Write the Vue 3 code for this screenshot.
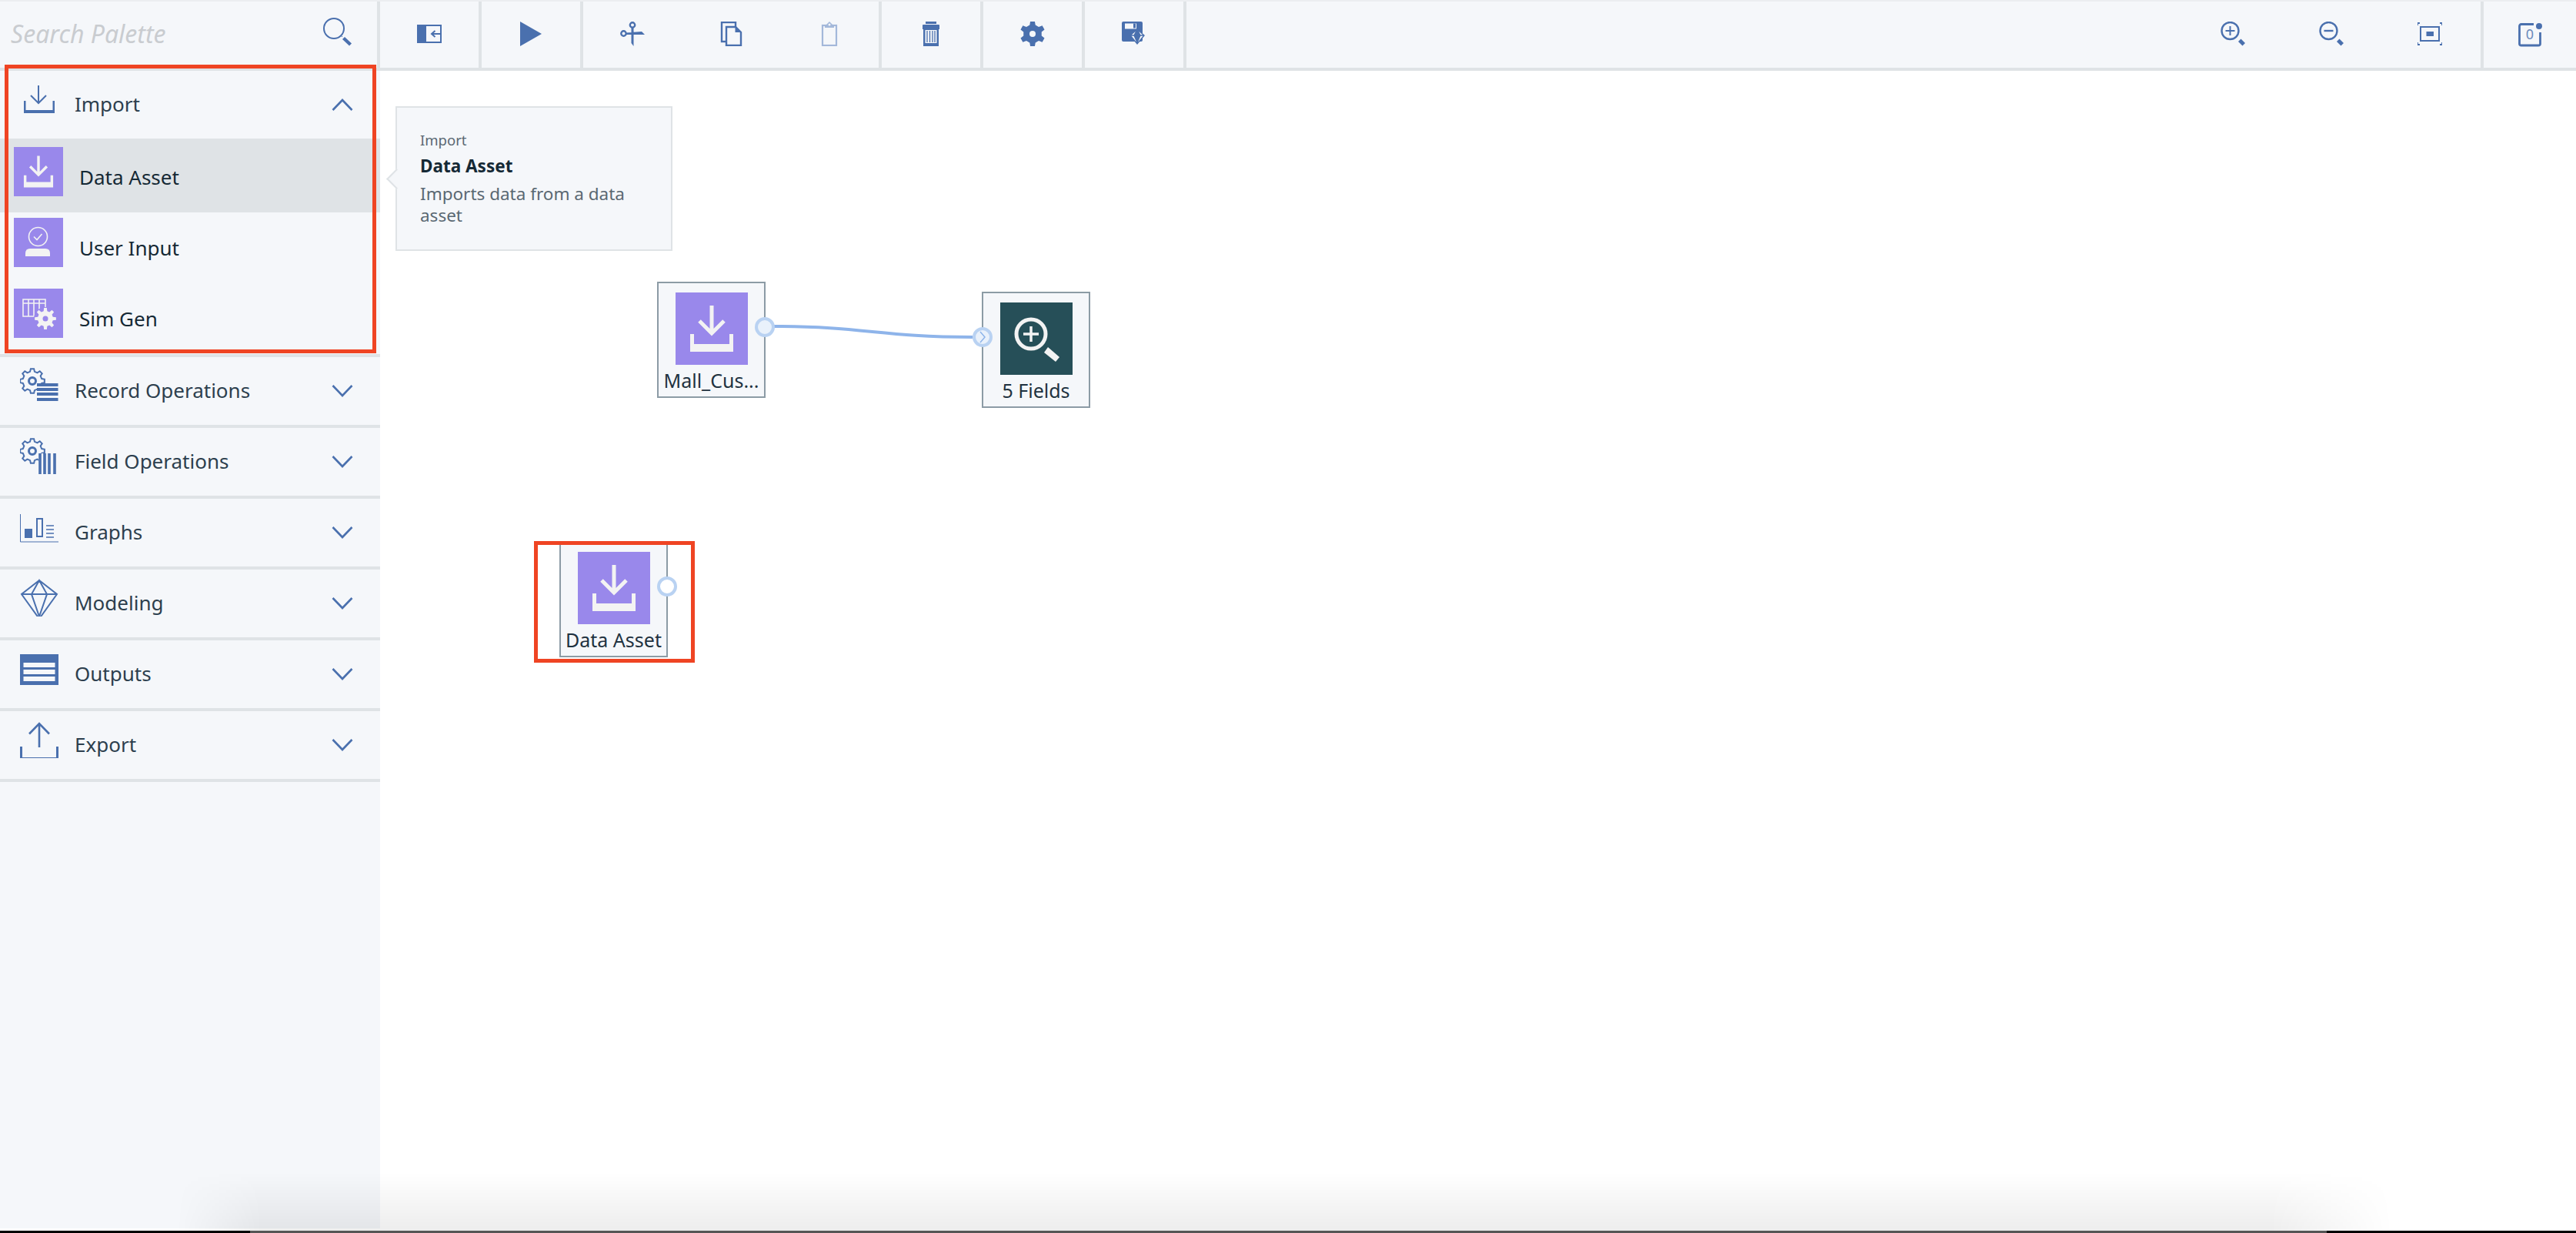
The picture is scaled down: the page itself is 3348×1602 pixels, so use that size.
<script setup>
// gear outline shared by the palette and toolbar icons
function gearPath(cx, cy, rIn, rOut, teeth) {
  const pitch = (Math.PI * 2) / teeth
  const pts = []
  for (let i = 0; i < teeth; i++) {
    const a = -Math.PI / 2 + i * pitch
    for (const [off, r] of [[-0.3, rIn], [-0.17, rOut], [0.17, rOut], [0.3, rIn]]) {
      const t = a + off * pitch
      pts.push((cx + Math.cos(t) * r).toFixed(2) + ' ' + (cy + Math.sin(t) * r).toFixed(2))
    }
  }
  return 'M' + pts.join('L') + 'Z'
}

const recordGear = gearPath(16, 20, 12.5, 16, 8)
const fieldGear = gearPath(16, 19, 12.5, 16, 8)
const simGear = gearPath(41, 39, 10, 14, 8)
const toolGear = gearPath(16, 16, 12, 16.5, 6)

const items = [
  { label: 'Data Asset', icon: 'node-import', active: true },
  { label: 'User Input', icon: 'node-user' },
  { label: 'Sim Gen', icon: 'node-sim' }
]

const categories = [
  { label: 'Record Operations', icon: 'cat-record' },
  { label: 'Field Operations', icon: 'cat-field' },
  { label: 'Graphs', icon: 'cat-graphs' },
  { label: 'Modeling', icon: 'cat-modeling' },
  { label: 'Outputs', icon: 'cat-outputs' },
  { label: 'Export', icon: 'cat-export' }
]

const toolGroups = [
  ['tb-panel'],
  ['tb-play'],
  ['tb-cut', 'tb-copy', 'tb-paste'],
  ['tb-trash'],
  ['tb-gear'],
  ['tb-save']
]

const nodes = [
  { label: 'Mall_Cus...', x: 360, y: 274, icon: 'node-import', out: 'filled' },
  { label: '5 Fields', x: 782, y: 287, icon: 'node-fields', input: true },
  { label: 'Data Asset', x: 233, y: 611, icon: 'node-import', out: 'empty' }
]
</script>

<template>
  <div class="app">
    <svg class="sprite" width="0" height="0">
      <defs>
        <symbol id="node-import" viewBox="0 0 94 94">
          <path d="M47 17V53M31 37L47 53L63 37" fill="none" stroke="#f3f3f3" stroke-width="5" />
          <path d="M19 54H24V67H70V54H75V77H19Z" fill="#f3f3f3" />
        </symbol>
        <symbol id="node-user" viewBox="0 0 64 64">
          <circle cx="31.5" cy="24.5" r="12" fill="none" stroke="#f3f3f3" stroke-width="1.6" />
          <path d="M26 24.5L30 28.5L36.5 21" fill="none" stroke="#f3f3f3" stroke-width="1.6" />
          <path d="M15 50V46Q15 40 21 40H41Q47 40 47 46V50Z" fill="#f3f3f3" />
        </symbol>
        <symbol id="node-sim" viewBox="0 0 64 64">
          <path d="M12 14H41V36H12ZM12 19H41M19 14V36M26 14V36M33 14V36M12 14H41" fill="none" stroke="#f3f3f3" stroke-width="1.6" />
          <circle cx="41" cy="39" r="15" fill="#9988eb" />
          <path :d="simGear" fill="#f3f3f3" />
          <circle cx="41" cy="39" r="3.5" fill="#9988eb" />
        </symbol>
        <symbol id="node-fields" viewBox="0 0 94 94">
          <circle cx="40" cy="41" r="19" fill="none" stroke="#f3f3f3" stroke-width="5" />
          <path d="M30 41H50M40 31V51" stroke="#f3f3f3" stroke-width="3.5" />
          <path d="M62 58L77 71L72 77L57 65Z" fill="#f3f3f3" />
        </symbol>

        <symbol id="cat-import" viewBox="0 0 50 50">
          <path d="M24 8V31M14 21L24 31L34 21" fill="none" stroke="#4a70ae" stroke-width="2" />
          <path d="M5 28H7.5V40H42.5V28H45V44H5Z" fill="#4a70ae" />
        </symbol>
        <symbol id="cat-record" viewBox="0 0 50 50">
          <path :d="recordGear" fill="none" stroke="#4a70ae" stroke-width="2" />
          <circle cx="16" cy="20" r="4.5" fill="none" stroke="#4a70ae" stroke-width="3" />
          <rect x="22" y="23" width="27.5" height="23" fill="#f5f7fa" />
          <path d="M22 25H49.5M22 31H49.5M22 37H49.5M22 44H49.5" stroke="#4a70ae" stroke-width="4" />
        </symbol>
        <symbol id="cat-field" viewBox="0 0 50 50">
          <path :d="fieldGear" fill="none" stroke="#4a70ae" stroke-width="2" />
          <circle cx="16" cy="19" r="4.5" fill="none" stroke="#4a70ae" stroke-width="3" />
          <rect x="24" y="22" width="24" height="27" fill="#f5f7fa" />
          <path d="M26 22V49M32 22V49M38 22V49M45 22V49" stroke="#4a70ae" stroke-width="3.6" />
        </symbol>
        <symbol id="cat-graphs" viewBox="0 0 50 50">
          <path d="M.5 9V45H50" fill="none" stroke="#4a70ae" />
          <rect x="6" y="28" width="10" height="12" fill="#4a70ae" />
          <rect x="22" y="15" width="7" height="23" fill="none" stroke="#4a70ae" stroke-width="2" />
          <path d="M34 24H44M34 29H44M34 34H44M34 39H44" stroke="#4a70ae" stroke-width="1.5" />
        </symbol>
        <symbol id="cat-modeling" viewBox="0 0 50 50">
          <path d="M25 3L48 21L25 53L2 21ZM2 21H48M25 3L15 21L25 50L35 21Z" fill="none" stroke="#4a70ae" stroke-width="2" />
        </symbol>
        <symbol id="cat-outputs" viewBox="0 0 50 50">
          <rect y="7" width="50" height="40" fill="#4a70ae" />
          <path d="M4.5 18H45.5V24H4.5ZM4.5 27H45.5V33H4.5ZM4.5 36H45.5V42H4.5Z" fill="#f5f7fa" />
        </symbol>
        <symbol id="cat-export" viewBox="0 0 50 50">
          <path d="M25 6V36M12 18.500L25 5L38 18.500" fill="none" stroke="#4a70ae" stroke-width="2.600" />
          <path d="M0 35H3V49H47V35H50V54H0Z" fill="#4a70ae" />
        </symbol>

        <symbol id="tb-panel" viewBox="0 0 32 32">
          <rect y="4" width="32" height="24" fill="#4a70ae" />
          <rect x="12" y="6" width="18" height="20" fill="#f5f7fa" />
          <path d="M19 16H30M23.5 12L19 16L23.5 20" fill="none" stroke="#4a70ae" stroke-width="2" />
        </symbol>
        <symbol id="tb-play" viewBox="0 0 32 32">
          <path d="M2 0L30 16L2 32Z" fill="#4a70ae" />
        </symbol>
        <symbol id="tb-cut" viewBox="0 0 32 32">
          <circle cx="16" cy="4.5" r="3.2" fill="none" stroke="#4a70ae" stroke-width="2.4" />
          <circle cx="4.5" cy="15.5" r="3.2" fill="none" stroke="#4a70ae" stroke-width="2.4" />
          <path d="M14.5 7H17.5V32L14.5 28ZM8 14.5L28 13L32 17L8 17Z" fill="#4a70ae" />
        </symbol>
        <symbol id="tb-copy" viewBox="0 0 32 32">
          <rect x="4" y="1" width="18" height="25" fill="none" stroke="#4a70ae" stroke-width="2.4" />
          <path d="M10 7H22L29 14V31H10Z" fill="#f5f7fa" stroke="#4a70ae" stroke-width="2.4" />
          <path d="M21.5 6V14H29Z" fill="#4a70ae" />
        </symbol>
        <symbol id="tb-paste" viewBox="0 0 32 32">
          <rect x="7" y="5" width="18" height="26" fill="none" stroke="#a3b8da" stroke-width="2.2" />
          <path d="M10 6L13 3L16 0L19 3L22 6V8H10Z" fill="#a3b8da" />
          <circle cx="16" cy="4" r="1.5" fill="#f5f7fa" />
        </symbol>
        <symbol id="tb-trash" viewBox="0 0 32 32">
          <path d="M9 0H23V3H9ZM6 4H26Q27 4 27 5V10H26V32H6V10H5V5Q5 4 6 4Z" fill="#4a70ae" />
          <rect x="8.5" y="11" width="15" height="17" fill="#f5f7fa" />
          <path d="M11 12V27M14.5 12V27M18 12V27M21 12V27" stroke="#4a70ae" stroke-width="1.3" />
        </symbol>
        <symbol id="tb-gear" viewBox="0 0 32 32">
          <path :d="toolGear" fill="#4a70ae" />
          <circle cx="16" cy="16" r="4" fill="#f5f7fa" />
        </symbol>
        <symbol id="tb-save" viewBox="0 0 32 32">
          <rect width="27" height="26" rx="2" fill="#4a70ae" />
          <rect x="4" y="2.5" width="15" height="7" fill="#f5f7fa" />
          <rect x="15" y="2.5" width="3" height="6" fill="#4a70ae" />
          <path d="M20 10L29 18L20 29L11 18ZM11 18H29M20 10L16 18L20 27L24 18Z" fill="#f5f7fa" stroke="#4a70ae" stroke-width="1.4" />
        </symbol>
        <symbol id="tb-zoom-in" viewBox="0 0 32 32">
          <circle cx="12.5" cy="12" r="11" fill="none" stroke="#4a70ae" stroke-width="2.4" />
          <path d="M6.5 12H18.5M12.5 6V18" stroke="#4a70ae" stroke-width="2" />
          <path d="M23 26L26.500 22.500L32 28L28.500 31.500Z" fill="#4a70ae" />
        </symbol>
        <symbol id="tb-zoom-out" viewBox="0 0 32 32">
          <circle cx="12.5" cy="12" r="11" fill="none" stroke="#4a70ae" stroke-width="2.4" />
          <path d="M6.5 12H18.5" stroke="#4a70ae" stroke-width="2.4" />
          <path d="M23 26L26.500 22.500L32 28L28.500 31.500Z" fill="#4a70ae" />
        </symbol>
        <symbol id="tb-fit" viewBox="0 0 32 32">
          <rect x="4" y="7" width="24" height="18" fill="none" stroke="#4a70ae" stroke-width="2" />
          <rect x="11.500" y="13" width="9.500" height="6" fill="#4a70ae" />
          <path d="M0 5V2H3M29 2H32V5M0 27V30H3M29 30H32V27" fill="none" stroke="#4a70ae" stroke-width="1.800" />
        </symbol>
      </defs>
    </svg>

    <aside class="palette">
      <div class="search">
        <span class="search-text">Search Palette</span>
        <svg class="search-icon" width="40" height="40" viewBox="0 0 40 40">
          <circle cx="15" cy="15" r="13" fill="none" stroke="#4a70ae" stroke-width="2" />
          <path d="M24 24L26 26" stroke="#4a70ae" />
          <path d="M26 29L29 26L38 34.500L35 37.500Z" fill="#4a70ae" />
        </svg>
      </div>

      <section class="import">
        <div class="cat-row cat-open">
          <svg class="cat-icon"><use href="#cat-import" /></svg>
          <span class="cat-label">Import</span>
          <svg class="chevron" width="28" height="16" viewBox="0 0 28 16">
            <path d="M1.500 15L14 2L26.500 15" fill="none" stroke="#4a70ae" stroke-width="2.600" />
          </svg>
        </div>
        <div v-for="item in items" :key="item.label" class="item" :class="{ active: item.active }">
          <svg class="item-icon"><use :href="'#' + item.icon" /></svg>
          <span class="item-label">{{ item.label }}</span>
        </div>
      </section>

      <div v-for="cat in categories" :key="cat.label" class="cat-row cat-closed">
        <svg class="cat-icon"><use :href="'#' + cat.icon" /></svg>
        <span class="cat-label">{{ cat.label }}</span>
        <svg class="chevron" width="28" height="16" viewBox="0 0 28 16">
          <path d="M1.500 1L14 14L26.500 1" fill="none" stroke="#4a70ae" stroke-width="2.600" />
        </svg>
      </div>

      <div class="annot annot-palette"></div>
    </aside>

    <main class="main">
      <div class="toolbar">
        <div v-for="(group, i) in toolGroups" :key="i" class="tool-group">
          <div v-for="icon in group" :key="icon" class="tool">
            <svg class="tool-icon"><use :href="'#' + icon" /></svg>
          </div>
        </div>
        <div class="tool-spacer"></div>
        <div class="zoom-group">
          <div class="tool"><svg class="tool-icon"><use href="#tb-zoom-in" /></svg></div>
          <div class="tool"><svg class="tool-icon"><use href="#tb-zoom-out" /></svg></div>
          <div class="tool"><svg class="tool-icon"><use href="#tb-fit" /></svg></div>
        </div>
        <div class="notify">
          <svg class="tool-icon" viewBox="0 0 32 32">
            <path d="M21 3.500H5Q2.500 3.500 2.500 6V29Q2.500 31 5 31H27Q29.500 31 29.500 29V14" fill="none" stroke="#4a70ae" stroke-width="2.800" />
            <circle cx="28" cy="6" r="4" fill="#4a70ae" />
            <text x="16" y="23" text-anchor="middle" class="notify-count">0</text>
          </svg>
        </div>
      </div>

      <div class="canvas">
        <div class="tooltip">
          <div class="tip-cat">Import</div>
          <div class="tip-title">Data Asset</div>
          <div class="tip-desc">Imports data from a data asset</div>
        </div>

        <svg class="links" width="1000" height="500">
          <path d="M512 332C630 332 650 346 770 346" fill="none" stroke="#8eb4ea" stroke-width="4" />
        </svg>

        <div
          v-for="node in nodes"
          :key="node.label"
          class="node"
          :style="{ left: node.x + 'px', top: node.y + 'px' }"
        >
          <svg class="node-image" :class="{ dark: node.input }"><use :href="'#' + node.icon" /></svg>
          <span class="node-label">{{ node.label }}</span>
          <span v-if="node.out" class="port port-out" :class="node.out"></span>
          <span v-if="node.input" class="port port-in">
            <svg width="10" height="18" viewBox="0 0 10 18">
              <path d="M2 2L8 9L2 16" fill="none" stroke="#8eb4ea" stroke-width="1.500" />
            </svg>
          </span>
        </div>

        <div class="annot annot-node"></div>
      </div>
    </main>

    <div class="bottom-fade"></div>
    <div class="bottom-edge"></div>
  </div>
</template>

<style scoped>
.app {
  position: relative;
  display: flex;
  height: 1602px;
  overflow: hidden;
  background: #fff;
  font-family: "Noto Sans", "Liberation Sans", sans-serif;
  color: #152935;
}
.sprite {
  position: absolute;
}

/* palette */
.palette {
  position: relative;
  width: 494px;
  flex: none;
  margin-bottom: 6px;
  background: #f5f7fa;
  border-top: 2px solid #eceef1;
}
.search {
  height: 90px;
  box-sizing: border-box;
  display: flex;
  align-items: center;
  justify-content: space-between;
  padding: 0 31px 0 14px;
  border-bottom: 4px solid #dfe3e6;
  border-right: 4px solid #dfe3e6;
}
.search-text {
  margin-top: -3px;
  font-style: italic;
  font-size: 32px;
  color: #c9ccd0;
}
.search-icon {
  margin-top: -6px;
}
.cat-row {
  display: flex;
  align-items: center;
  padding-left: 26px;
  padding-right: 35px;
}
.cat-open {
  height: 88px;
}
.cat-closed {
  height: 88px;
  border-bottom: 4px solid #dfe3e6;
}
.cat-icon {
  width: 50px;
  height: 50px;
  margin-bottom: 16px;
  flex: none;
  overflow: visible;
}
.cat-label {
  margin-top: -2px;
  margin-left: 21px;
  font-size: 26px;
  flex: 1;
  color: #2d3f4e;
}
.import {
  border-bottom: 4px solid #dfe3e6;
}
.item {
  height: 92px;
  display: flex;
  align-items: flex-start;
  padding: 7px 0 0 18px;
  box-sizing: border-box;
}
.item.active {
  height: 96px;
  padding-top: 11px;
  background: #dfe3e6;
}
.item-icon {
  width: 64px;
  height: 64px;
  flex: none;
  background: #9988eb;
}
.item-label {
  margin: 20px 0 0 21px;
  font-size: 26px;
  line-height: 38px;
}

/* toolbar */
.main {
  flex: 1;
  display: flex;
  flex-direction: column;
  min-width: 0;
}
.toolbar {
  height: 92px;
  box-sizing: border-box;
  display: flex;
  flex: none;
  background: #f5f7fa;
  border-top: 2px solid #eceef1;
  border-bottom: 4px solid #dfe3e6;
}
.tool-group {
  display: flex;
  border-right: 4px solid #dfe3e6;
}
.tool {
  width: 128px;
  display: flex;
  align-items: center;
  justify-content: center;
}
.tool-icon {
  width: 32px;
  height: 32px;
  margin-top: -2px;
  overflow: visible;
}
.tool-spacer {
  flex: 1;
}
.zoom-group {
  display: flex;
  padding-right: 2px;
  border-right: 4px solid #dfe3e6;
}
.notify {
  width: 120px;
  display: flex;
  align-items: center;
  justify-content: center;
}
.notify-count {
  font-size: 18px;
  fill: #6b8abb;
  font-family: "Noto Sans", sans-serif;
}

/* canvas */
.canvas {
  position: relative;
  flex: 1;
}
.tooltip {
  position: absolute;
  left: 20px;
  top: 46px;
  width: 360px;
  height: 188px;
  box-sizing: border-box;
  padding: 28px 30px;
  background: #f5f7fa;
  border: 2px solid #dfe3e6;
  font-size: 20px;
  line-height: 28px;
  color: #5a6872;
}
.tooltip::before {
  content: "";
  position: absolute;
  left: -10px;
  top: 83px;
  width: 17px;
  height: 17px;
  background: #f5f7fa;
  border-left: 2px solid #dfe3e6;
  border-bottom: 2px solid #dfe3e6;
  transform: rotate(45deg);
}
.tip-cat {
  font-size: 18.5px;
}
.tip-title {
  margin-top: 6px;
  font-size: 22.5px;
  font-weight: 700;
  color: #152935;
}
.tip-desc {
  margin-top: 8px;
  font-size: 22.5px;
}
.links {
  position: absolute;
  left: 0;
  top: 0;
}
.node {
  position: absolute;
  width: 141px;
  height: 151px;
  box-sizing: border-box;
  display: flex;
  flex-direction: column;
  align-items: center;
  padding-top: 12px;
  background: #f5f7fa;
  border: 2px solid #8c9ba5;
}
.node-image {
  width: 94px;
  height: 94px;
  flex: none;
  background: #9988eb;
}
.node-image.dark {
  background: #264f58;
}
.node-label {
  flex: 1;
  display: flex;
  align-items: center;
  margin-top: -2px;
  font-size: 25px;
  color: #1f3240;
  white-space: nowrap;
}
.port {
  position: absolute;
  top: 44px;
  width: 26px;
  height: 26px;
  box-sizing: border-box;
  border-radius: 50%;
  border: 4px solid #b9d2f2;
  display: flex;
  align-items: center;
  justify-content: center;
}
.port-out {
  right: -14px;
}
.port-in {
  left: -14px;
  background: #e9f1fb;
}
.port.filled {
  background: #e9f1fb;
}
.port.empty {
  background: #fff;
}

/* red callouts */
.annot {
  position: absolute;
  box-sizing: border-box;
  border: 5px solid #ef4423;
}
.annot-palette {
  left: 6px;
  top: 82px;
  width: 483px;
  height: 375px;
}
.annot-node {
  left: 200px;
  top: 611px;
  width: 209px;
  height: 158px;
}

/* screen-capture edge at the bottom */
.bottom-fade {
  position: absolute;
  left: 0;
  right: 0;
  bottom: 3px;
  height: 76px;
  background: linear-gradient(to bottom, rgba(0, 0, 0, 0), rgba(0, 0, 0, 0.07));
  -webkit-mask-image: linear-gradient(to right, transparent 230px, #000 340px, #000 2950px, transparent 3110px);
  mask-image: linear-gradient(to right, transparent 230px, #000 340px, #000 2950px, transparent 3110px);
}
.bottom-edge {
  position: absolute;
  left: 0;
  right: 0;
  bottom: 0;
  height: 3px;
  background: linear-gradient(to right, #000 325px, #555 325px, #555 3024px, #000 3024px);
}
</style>
